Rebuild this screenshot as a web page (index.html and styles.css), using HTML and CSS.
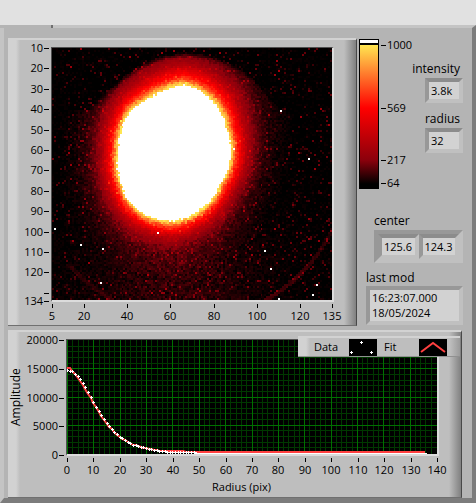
FILE: index.html
```
<!DOCTYPE html>
<html lang="en">
<head>
    <meta charset="UTF-8">
    <meta name="viewport" content="width=device-width, initial-scale=1.0">
    <title>Beam profile</title>
    <link rel="stylesheet" href="styles.css">
</head>
<body>
    <header class="topbar"></header>
    <main class="panel">
        <div class="upper">
            <section class="graph">
                <div class="image-grid">
                    <svg class="axis" id="image-y"></svg>
                    <canvas class="plot" id="image" width="141" height="126"></canvas>
                    <svg class="axis axis-x" id="image-x"></svg>
                </div>
            </section>

            <aside class="side">
                <div class="side-top">
                    <div class="ramp"></div>
                    <svg class="axis ramp-scale" id="ramp-scale"></svg>
                    <div class="readouts">
                        <label for="intensity">intensity</label>
                        <input class="field" id="intensity" value="3.8k" readonly>
                        <label for="radius">radius</label>
                        <input class="field" id="radius" value="32" readonly>
                    </div>
                </div>
                <div class="center-group">
                    <label for="center-x">center</label>
                    <div class="cluster">
                        <input class="field" id="center-x" value="125.6" readonly>
                        <input class="field" value="124.3." aria-label="center y" readonly>
                    </div>
                </div>
                <div class="mod-group">
                    <label for="last-mod">last mod</label>
                    <textarea class="field" id="last-mod" rows="2" readonly>16:23:07.000
18/05/2024</textarea>
                </div>
            </aside>
        </div>

        <section class="graph profile">
            <div class="legend">
                <span>Data</span>
                <svg width="28" height="17">
                    <rect width="28" height="17"/>
                    <path d="M11 3.5h3M12.5 2v3M1 13.5h3M2.5 12v3M21 13.5h3M22.5 12v3" stroke="#fff"/>
                </svg>
                <span>Fit</span>
                <svg width="28" height="17">
                    <rect width="28" height="17"/>
                    <path d="M2 13L14 4L26 13" stroke="#ff4040" stroke-width="2" fill="none"/>
                </svg>
            </div>
            <div class="profile-grid">
                <span class="y-title">Amplitude</span>
                <svg class="axis" id="profile-y"></svg>
                <canvas class="plot" id="profile"></canvas>
                <svg class="axis axis-x" id="profile-x"></svg>
                <span class="x-title">Radius (pix)</span>
            </div>
        </section>
    </main>
    <script src="script.js"></script>
</body>
</html>
```

FILE: styles.css
```
* {
    box-sizing: border-box;
}

body {
    margin: 0;
    background-color: #b4b4b4;
    font-family: 'Open Sans', 'Noto Sans', sans-serif;
    font-size: 12px;
    line-height: 16px;
    color: #000;
}

.topbar {
    height: 25px;
    background-color: #e1e1e1;
}

.panel {
    position: relative;
    padding: 10px 0 0 4px;
    background-color: #b4b4b4;
    border-style: solid;
    border-width: 3px 4px 5px 4px;
    border-color: #c4c4c4 #7c7c7c #7c7c7c #c4c4c4;
}

/* end of the hidden tab strip */
.panel::before {
    content: "";
    position: absolute;
    left: -4px;
    top: -3px;
    width: 51px;
    height: 3px;
    background-color: #b4b4b4;
    border-right: 2px solid #707070;
}

.upper {
    display: flex;
    margin-bottom: 4px;
}

.graph {
    position: relative;
    flex: 1;
    min-width: 0;
    border-top: 2px solid #d2d2d2;
    border-right: 1px solid #484848;
    border-bottom: 1px solid #707070;
    background: linear-gradient(to right, #d2d2d2 8px, #bebebe 12px, #bebebe calc(100% - 12px), #808080);
}

.image-grid {
    display: grid;
    grid-template-columns: 43px 1fr;
    grid-template-rows: 255px 23px;
    padding: 7px 22px 0 0;
}

.profile {
    margin-right: 10px;
}

.profile-grid {
    display: grid;
    grid-template-columns: 18px 40px 1fr;
    grid-template-rows: 117px 23px 18px;
    padding: 7px 22px 0 0;
}

.plot {
    display: block;
    width: 100%;
    height: 100%;
    min-width: 0;
    background-color: #000;
    border: 1px solid #505050;
    border-right: 2px solid #dcdcdc;
    border-bottom: 2px solid #dcdcdc;
    image-rendering: pixelated;
}

.axis {
    display: block;
    width: 100%;
    height: 100%;
    overflow: visible;
    font-size: 11px;
}

.axis line {
    stroke: #000;
    shape-rendering: crispEdges;
}

.axis-x {
    grid-column: -2;
}

.y-title {
    writing-mode: vertical-rl;
    transform: rotate(180deg);
    text-align: center;
}

.x-title {
    grid-column: -2;
    text-align: center;
    font-size: 11px;
    padding-right: 22px;
}

.legend {
    position: absolute;
    z-index: 1;
    top: 4px;
    right: 1px;
    width: 162px;
    height: 21px;
    display: grid;
    grid-template-columns: 35px 35px 35px 28px;
    align-items: center;
    padding-left: 16px;
    font-size: 11px;
    background: linear-gradient(to right, #d2d2d2 8px, #bebebe 12px, #bebebe calc(100% - 10px), #9a9a9a);
    border-top: 2px solid #d2d2d2;
    border-bottom: 1px solid #909090;
}

.legend svg {
    display: block;
}

.side {
    width: 115px;
    padding: 0 9px 0 2px;
    display: flex;
    flex-direction: column;
}

.side-top {
    display: flex;
    height: 150px;
    margin-top: 1px;
}

.ramp {
    width: 20px;
    border: 1px solid #000;
    background: linear-gradient(#fff 3px, #000 3px, #000 5px, #ffe650 5px, #ff8a32 30px, #f00 68px, #8b000c 120px, #000 144px);
}

.ramp-scale {
    width: 30px;
}

.readouts {
    flex: 1;
    display: flex;
    flex-direction: column;
    align-items: flex-end;
    padding-top: 22px;
}

.readouts label {
    padding-right: 3px;
}

.readouts .field {
    width: 38px;
    margin: 1px 0 8px;
}

.field {
    display: block;
    width: 100%;
    height: 25px;
    margin: 0;
    padding: 0 2px;
    font: inherit;
    font-size: 11px;
    color: #000;
    background-color: #d2d2d2;
    border-style: solid;
    border-width: 4px;
    border-color: #8c8c8c #c0c0c0 #c0c0c0 #989898;
    border-radius: 0;
    outline: none;
}

.center-group {
    margin: 24px 0 7px 15px;
}

.cluster {
    display: flex;
    margin-top: 1px;
    border-style: solid;
    border-width: 4px;
    border-color: #989898 #c0c0c0 #c0c0c0 #989898;
}

.mod-group {
    margin-left: 7px;
}

#last-mod {
    height: 39px;
    line-height: 15px;
    resize: none;
    overflow: hidden;
    border-color: #989898 #c0c0c0 #c0c0c0 #989898;
}
```

FILE: script.js
```
const SVG = "http://www.w3.org/2000/svg";

function add(svg, name, attrs, text) {
    const el = document.createElementNS(SVG, name);
    for (const key in attrs) el.setAttribute(key, attrs[key]);
    if (text !== undefined) el.textContent = text;
    svg.appendChild(el);
}

// ticks: [position 0..1, label]
function xAxis(id, ticks) {
    const svg = document.getElementById(id);
    const w = svg.clientWidth - 3;
    for (const [pos, label] of ticks) {
        const x = Math.round(pos * w) + 1;
        add(svg, "line", { x1: x, x2: x, y1: 2, y2: 6 });
        add(svg, "text", { x: x, y: 18, "text-anchor": "middle" }, label);
    }
}

function yAxis(id, ticks) {
    const svg = document.getElementById(id);
    const w = svg.clientWidth, h = svg.clientHeight - 2;
    for (const [pos, label] of ticks) {
        const y = Math.round(pos * h) + 1;
        add(svg, "line", { x1: w - 7, x2: w - 2, y1: y, y2: y });
        add(svg, "text", { x: w - 8, y: y + 4, "text-anchor": "end" }, label);
    }
}

const imageY = [];
for (let v = 10; v <= 130; v += 10) imageY.push([(v - 10) / 124, v === 130 ? "" : v]);
imageY.push([1, 134]);
const profileX = [];
for (let v = 0; v <= 140; v += 10) profileX.push([v / 140, v]);

function drawAxes() {
    for (const id of ["image-y", "image-x", "profile-y", "profile-x"]) {
        document.getElementById(id).replaceChildren();
    }
    yAxis("image-y", imageY);
    xAxis("image-x", [5, 20, 40, 60, 80, 100, 120, 135].map(v => [(v - 5) / 130, v]));
    yAxis("profile-y", [20000, 15000, 10000, 5000, 0].map(v => [1 - v / 20000, v]));
    xAxis("profile-x", profileX);
}

const scale = document.getElementById("ramp-scale");
for (const [y, label] of [[6, 1000], [69, 569], [121, 217], [144, 64]]) {
    add(scale, "line", { x1: 2, x2: 7, y1: y, y2: y });
    add(scale, "text", { x: 8, y: y + 4 }, label);
}

// ---- intensity image ----
let seed = 7;
function rnd() {
    seed = (seed * 1664525 + 1013904223) % 4294967296;
    return seed / 4294967296;
}

function lerpTable(table, x) {
    for (let i = 1; i < table.length; i++) {
        if (x <= table[i][0]) {
            const a = table[i - 1], b = table[i];
            return a[1] + (b[1] - a[1]) * (x - a[0]) / (b[0] - a[0]);
        }
    }
    return table[table.length - 1][1];
}

const stops = [[64, 0, 0, 0], [217, 139, 0, 12], [569, 255, 0, 0], [800, 255, 130, 45], [1000, 255, 230, 80]];
function color(v) {
    if (v > 1000) return [255, 255, 255];
    return [1, 2, 3].map(c => lerpTable(stops.map(s => [s[0], s[c]]), Math.max(64, v)));
}

// saturated spot radius by angle, and thickness of the halo round it
const edge = [[0, 58], [33, 57], [60, 63], [90, 69], [115, 68], [135, 65], [150, 61], [180, 56], [202, 57], [225, 59], [240, 58], [258, 61], [278, 68], [298, 66], [316, 63], [338, 58], [360, 58]];
const halo = [[0, 24], [45, 22], [90, 24], [135, 23], [180, 22], [225, 27], [258, 32], [278, 31], [316, 32], [360, 24]];
const falloff = [[0, 1001], [0.08, 900], [0.2, 680], [0.38, 540], [0.65, 330], [0.85, 240], [1, 190], [1.2, 145], [1.45, 110], [2, 80], [2.6, 60]];
const hot = [[54, 228], [80, 244], [102, 248], [100, 283], [158, 233], [235, 149], [282, 111], [311, 158], [267, 250], [272, 268], [319, 285], [315, 295], [280, 299]];

function drawImage() {
    const ctx = document.getElementById("image").getContext("2d");
    for (let j = 0; j < 126; j++) {
        for (let i = 0; i < 141; i++) {
            const x = 53 + i * 2, y = 49 + j * 2;
            const dx = x - 174, dy = y - 152;
            const angle = (Math.atan2(dy, dx) * 180 / Math.PI + 360) % 360;
            const d = Math.hypot(dx, dy) - lerpTable(edge, angle) + (rnd() - 0.5) * 2;
            let v = 1200;
            if (d > 0) {
                v = lerpTable(falloff, d / lerpTable(halo, angle));
                // upper limb cuts the halo off, more sharply towards the top
                const limb = Math.hypot(x - 190, y - 155) - 97;
                if (limb > 0 && dy < -40) {
                    v = Math.max(60, v - limb * 20 * Math.min(1, (-40 - dy) / 40));
                }
                v += (rnd() - 0.5) * (v > 85 ? 50 : 34);
                // stray light under the spot
                if (dy > 20) v += (20 + 70 * rnd()) * Math.exp(-dx * dx / 7000) * Math.min(1, (dy - 20) / 90);
                const ring = Math.abs(Math.hypot(x - 190, y - 160) - 160);
                if (ring < 2 && dy > 50 && dx > 60) v += Math.min(60, dy * 0.5);
                if (ring < 2 && dy > 112 && dx < -60) v += 35;
                if (rnd() < 0.09) v += rnd() * 120;
                if (rnd() < 0.003) v += 200;
            }
            const c = color(d > 0 ? Math.min(v, 1000) : v).map(Math.round);
            ctx.fillStyle = `rgb(${c.join(",")})`;
            ctx.fillRect(i, j, 1, 1);
        }
    }
    ctx.fillStyle = "#fff";
    for (const [x, y] of hot) {
        ctx.fillRect(Math.floor((x - 52) / 2), Math.floor((y - 48) / 2), 1, 1);
    }
}

// ---- radial profile ----
const profile = [[0, 14700], [2, 14500], [3, 14000], [5, 13100], [7, 11600], [10, 9050], [12, 7350], [15, 5250], [18, 3750], [20, 2900], [22, 2300], [25, 1500], [30, 850], [35, 400], [40, 150], [50, 80], [60, 80], [140, 80]];
const fit = [[0, 15100], [1, 15000], [3, 13900], [5, 12800], [7, 11300], [10, 8900], [12, 7300], [15, 5200], [18, 3650], [20, 2850], [22, 2250], [25, 1500], [30, 800], [35, 400], [45, 260], [140, 260]];

function drawProfile() {
    const canvas = document.getElementById("profile");
    const w = canvas.width = canvas.clientWidth;
    const h = canvas.height = canvas.clientHeight;
    const ctx = canvas.getContext("2d");
    const px = v => Math.round(v / 140 * (w - 1));
    const py = v => Math.round((1 - v / 20000) * (h - 1));

    for (const major of [false, true]) {
        ctx.fillStyle = major ? "#007000" : "#003800";
        for (let v = 0; v < 140; v += major ? 10 : 2) ctx.fillRect(px(v), 0, 1, h);
        for (let v = 1000; v < 20000; v += 1000) {
            if (!major || v % 5000 === 0) ctx.fillRect(0, py(v), w, 1);
        }
    }

    ctx.strokeStyle = "#ff4040";
    ctx.lineWidth = 2;
    ctx.beginPath();
    for (let v = 0; v <= 136; v++) ctx.lineTo(px(v), py(lerpTable(fit, v)));
    ctx.stroke();

    ctx.fillStyle = "#fff";
    for (let v = 0; v <= 136; v++) {
        const x = px(v), y = py(lerpTable(profile, v));
        ctx.fillRect(x - 1, y, 3, 1);
        if (v < 50) ctx.fillRect(x, y - 1, 1, 3);
    }
}

drawAxes();
drawImage();
drawProfile();
window.addEventListener("resize", () => {
    drawAxes();
    drawProfile();
});
```
